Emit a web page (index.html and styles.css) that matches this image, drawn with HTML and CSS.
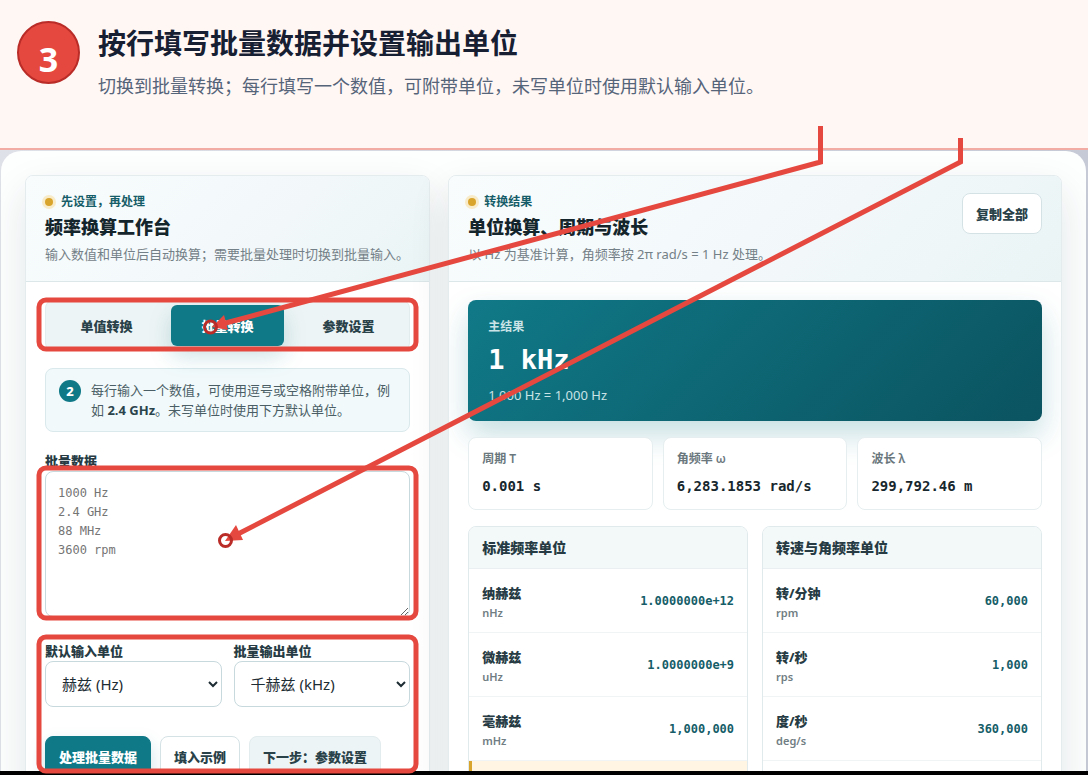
FILE: index.html
```html
<!DOCTYPE html>
<html lang="zh-CN">
<head>
    <meta charset="UTF-8">
    <meta name="viewport" content="width=device-width, initial-scale=1">
    <title>频率换算工作台</title>
    <link rel="stylesheet" href="styles.css">
</head>
<body>
<header class="step">
    <div class="step-number">3</div>
    <div class="step-text">
        <h1>按行填写批量数据并设置输出单位</h1>
        <p>切换到批量转换；每行填写一个数值，可附带单位，未写单位时使用默认输入单位。</p>
    </div>
</header>

<main class="stage">
    <div class="workspace">
        <section class="panel">
            <div class="panel-head">
                <div>
                    <div class="eyebrow">先设置，再处理</div>
                    <h2>频率换算工作台</h2>
                    <p>输入数值和单位后自动换算；需要批量处理时切换到批量输入。</p>
                </div>
            </div>
            <div class="panel-body">
                <div class="tabs">
                    <button type="button" class="tab">单值转换</button>
                    <button type="button" class="tab active">批量转换</button>
                    <button type="button" class="tab">参数设置</button>
                </div>
                <div class="hint">
                    <span class="hint-number">2</span>
                    <p>每行输入一个数值，可使用逗号或空格附带单位，例如 <strong>2.4 GHz</strong>。未写单位时使用下方默认单位。</p>
                </div>
                <div class="field">
                    <label for="batch">批量数据</label>
                    <textarea id="batch" placeholder="1000 Hz
2.4 GHz
88 MHz
3600 rpm"></textarea>
                </div>
                <div class="field-row">
                    <div class="field">
                        <label for="unitIn">默认输入单位</label>
                        <select id="unitIn">
                            <option>赫兹 (Hz)</option>
                            <option>千赫兹 (kHz)</option>
                        </select>
                    </div>
                    <div class="field">
                        <label for="unitOut">批量输出单位</label>
                        <select id="unitOut">
                            <option>千赫兹 (kHz)</option>
                            <option>赫兹 (Hz)</option>
                        </select>
                    </div>
                </div>
                <div class="actions">
                    <button type="button" class="btn primary">处理批量数据</button>
                    <button type="button" class="btn">填入示例</button>
                    <button type="button" class="btn soft">下一步：参数设置</button>
                </div>
            </div>
        </section>

        <section class="panel">
            <div class="panel-head">
                <div>
                    <div class="eyebrow">转换结果</div>
                    <h2>单位换算、周期与波长</h2>
                    <p>以 Hz 为基准计算，角频率按 2π rad/s = 1 Hz 处理。</p>
                </div>
                <button type="button" class="btn">复制全部</button>
            </div>
            <div class="panel-body">
                <div class="main-result">
                    <div class="main-label">主结果</div>
                    <div class="main-value">1 kHz</div>
                    <div class="main-note">1,000 Hz = 1,000 Hz</div>
                </div>
                <div class="metrics">
                    <div class="metric">
                        <span>周期 T</span>
                        <strong>0.001 s</strong>
                    </div>
                    <div class="metric">
                        <span>角频率 ω</span>
                        <strong>6,283.1853 rad/s</strong>
                    </div>
                    <div class="metric">
                        <span>波长 λ</span>
                        <strong>299,792.46 m</strong>
                    </div>
                </div>
                <div class="groups">
                    <table class="units">
                        <thead>
                        <tr><th colspan="2">标准频率单位</th></tr>
                        </thead>
                        <tbody>
                        <tr><td>纳赫兹<small>nHz</small></td><td class="num">1.0000000e+12</td></tr>
                        <tr><td>微赫兹<small>uHz</small></td><td class="num">1.0000000e+9</td></tr>
                        <tr><td>毫赫兹<small>mHz</small></td><td class="num">1,000,000</td></tr>
                        <tr class="current"><td></td><td class="num"></td></tr>
                        </tbody>
                    </table>
                    <table class="units">
                        <thead>
                        <tr><th colspan="2">转速与角频率单位</th></tr>
                        </thead>
                        <tbody>
                        <tr><td>转/分钟<small>rpm</small></td><td class="num">60,000</td></tr>
                        <tr><td>转/秒<small>rps</small></td><td class="num">1,000</td></tr>
                        <tr><td>度/秒<small>deg/s</small></td><td class="num">360,000</td></tr>
                        <tr><td></td><td class="num"></td></tr>
                        </tbody>
                    </table>
                </div>
            </div>
        </section>
    </div>
</main>

<!-- callouts drawn over the page -->
<svg class="callouts" width="1088" height="775" viewBox="0 0 1088 775" aria-hidden="true">
    <g class="frame">
        <rect x="39" y="300" width="377" height="49" rx="7"/>
        <rect x="39" y="468" width="377" height="150" rx="7"/>
        <rect x="39" y="637" width="377" height="134" rx="7"/>
        <path d="M820.500 126V162L222 324"/>
        <path d="M960.500 138V162L236 535"/>
    </g>
    <path class="head" d="M212 327L224 315L228 330Z"/>
    <path class="head" d="M225 541L236 525L243 540Z"/>
    <circle class="target" cx="210.500" cy="327" r="6"/>
    <circle class="target" cx="225.500" cy="540.500" r="6"/>
</svg>
</body>
</html>
```

FILE: styles.css
```css
* {
    box-sizing: border-box;
}

body {
    margin: 0;
    height: 100vh;
    display: flex;
    flex-direction: column;
    overflow: hidden;
    border-bottom: 4px solid #000;
    font-family: "Noto Sans", "Noto Sans CJK SC", sans-serif;
    font-size: 13px;
    line-height: 20px;
    color: #263b43;
}

h1, h2, p {
    margin: 0;
}

button, select, textarea {
    font-family: inherit;
}

/* step header */
.step {
    flex: none;
    display: flex;
    gap: 18px;
    height: 150px;
    padding: 21px 17px;
    background: #fff7f4;
    border-bottom: 2px solid #f2aca3;
}

.step-number {
    width: 63px;
    height: 63px;
    padding-top: 12px;
    border: 2px solid #b92c27;
    border-radius: 50%;
    background: #e5483f;
    color: #fff;
    font-size: 34px;
    font-weight: 700;
    line-height: 48px;
    text-align: center;
}

.step-text h1 {
    font-size: 28px;
    line-height: 44px;
    color: #172033;
}

.step-text p {
    margin-top: 7px;
    font-size: 18px;
    line-height: 28px;
    color: #56647a;
}

/* app */
.stage {
    flex: 1;
    min-height: 0;
    overflow: hidden;
    padding: 1px 2px 0 1px;
    background: linear-gradient(90deg, #dfe1e8, #c5cad6);
}

.workspace {
    display: grid;
    grid-template-columns: 33fr 50fr;
    gap: 18px;
    padding: 24px;
    border-radius: 20px;
    background: #fdfefe;
}

.panel {
    overflow: hidden;
    border: 1px solid #e4ecee;
    border-radius: 8px;
    background: #fff;
    box-shadow: 0 16px 40px rgba(22, 42, 54, 0.11);
}

.panel-head {
    display: flex;
    justify-content: space-between;
    align-items: flex-start;
    height: 106px;
    padding: 17px 19px;
    border-bottom: 1px solid #dce7e9;
    background: linear-gradient(135deg, #f8fcfd, #f2f8fa 60%, #eaf4f5);
}

.eyebrow {
    display: flex;
    align-items: center;
    gap: 8px;
    font-size: 12px;
    line-height: 18px;
    font-weight: 700;
    color: #155d68;
}

.eyebrow::before {
    content: "";
    width: 8px;
    height: 8px;
    border-radius: 50%;
    background: #d9a42c;
    box-shadow: 0 0 0 3px #f8ebc9;
}

.panel-head h2 {
    margin-top: 2px;
    font-size: 18px;
    line-height: 28px;
    font-weight: 800;
    color: #14252b;
}

.panel-head p {
    margin-top: 3px;
    color: #748087;
}

.panel-body {
    padding: 18px 19px;
}

.tabs {
    display: grid;
    grid-template-columns: repeat(3, 1fr);
    gap: 8px;
    padding: 4px;
    border: 1px solid #e2ebed;
    border-radius: 8px;
    background: #edf4f5;
}

.tab {
    height: 41px;
    padding: 0;
    border: 0;
    border-radius: 6px;
    background: none;
    color: #294149;
    font-size: 13px;
    font-weight: 800;
}

.tab.active {
    background: #107987;
    color: #fff;
    box-shadow: 0 10px 22px rgba(16, 121, 135, 0.22);
}

.hint {
    display: flex;
    gap: 10px;
    margin-top: 17px;
    padding: 11px 13px;
    border: 1px solid #d9e9ec;
    border-radius: 8px;
    background: #f1f9fb;
    color: #4a5e65;
}

.hint-number {
    flex: none;
    width: 22px;
    height: 22px;
    border-radius: 50%;
    background: #107987;
    color: #fff;
    font-weight: 800;
    line-height: 22px;
    text-align: center;
}

.hint strong {
    color: #2b444c;
}

.field {
    display: flex;
    flex-direction: column;
    margin-top: 19px;
}

.field label {
    font-weight: 800;
}

.field textarea {
    height: 146px;
    padding: 12px;
    border: 1px solid #c7d9dd;
    border-radius: 8px;
    font-family: "DejaVu Sans Mono", monospace;
    font-size: 12px;
    line-height: 19px;
    resize: vertical;
}

.field textarea::placeholder {
    color: #757575;
}

.field-row {
    display: grid;
    grid-template-columns: 1fr 1fr;
    gap: 12px;
    margin-top: 5px;
}

.field select {
    height: 46px;
    padding: 0 12px;
    border: 1px solid #c7d9dd;
    border-radius: 8px;
    background-color: #fff;
    color: #1c2c32;
    font-size: 15px;
}

.actions {
    display: flex;
    gap: 9px;
    margin-top: 29px;
}

.btn {
    height: 41px;
    padding: 0 13px 1px;
    border: 1px solid #d5e2e5;
    border-radius: 8px;
    background: #fff;
    color: #294149;
    font-size: 13px;
    font-weight: 800;
    white-space: nowrap;
}

.btn.primary {
    border-color: #107987;
    background: #107987;
    color: #fff;
    box-shadow: 0 8px 18px rgba(16, 121, 135, 0.2);
}

.btn.soft {
    border-color: #e2ebed;
    background: #edf4f5;
}

/* results */
.main-result {
    height: 121px;
    padding: 17px 20px;
    border-radius: 8px;
    background: linear-gradient(135deg, #107987, #0b5360);
    box-shadow: 0 14px 30px rgba(16, 121, 135, 0.24);
    color: #c9e3e6;
}

.main-label {
    font-size: 12px;
    font-weight: 700;
}

.main-value {
    margin-top: 4px;
    color: #fff;
    font-family: "DejaVu Sans Mono", monospace;
    font-size: 27px;
    font-weight: 700;
    line-height: 38px;
}

.main-note {
    margin-top: 6px;
}

.metrics {
    display: grid;
    grid-template-columns: repeat(3, 1fr);
    gap: 10px;
    margin-top: 16px;
}

.metric {
    height: 73px;
    padding: 12px 13px;
    border: 1px solid #e6eeef;
    border-radius: 8px;
    background: #fff;
    white-space: nowrap;
}

.metric span {
    display: block;
    font-size: 12px;
    line-height: 18px;
    font-weight: 600;
    color: #6a777d;
}

.metric strong {
    display: block;
    margin-top: 8px;
    color: #17272d;
    font-family: "DejaVu Sans Mono", monospace;
    font-size: 14px;
}

.groups {
    display: grid;
    grid-template-columns: 1fr 1fr;
    gap: 14px;
    margin-top: 16px;
}

.units {
    width: 100%;
    border: 1px solid #e0eaec;
    border-radius: 8px;
    border-spacing: 0;
    overflow: hidden;
}

.units th {
    height: 42px;
    padding: 0 13px;
    background: #f3f8f9;
    border-bottom: 1px solid #eaf0f2;
    font-size: 14px;
    font-weight: 800;
    text-align: left;
}

.units td {
    height: 64px;
    padding: 4px 13px 0;
    border-bottom: 1px solid #f0f4f5;
    font-weight: 800;
}

.units small {
    display: block;
    font-size: 11px;
    font-weight: 600;
    color: #707d83;
}

.units .num {
    padding-top: 0;
    color: #155d68;
    font-family: "DejaVu Sans Mono", monospace;
    font-size: 12px;
    font-weight: 700;
    text-align: right;
}

.units .current td {
    background: #fff5e2;
}

.units .current td:first-child {
    border-left: 3px solid #d9a42c;
}

/* callouts */
.callouts {
    position: absolute;
    top: 0;
    left: 0;
    pointer-events: none;
}

.frame {
    fill: none;
    stroke: #e5483f;
    stroke-width: 5;
}

.head {
    fill: #e5483f;
}

.target {
    fill: none;
    stroke: #b92c27;
    stroke-width: 3;
}
```
